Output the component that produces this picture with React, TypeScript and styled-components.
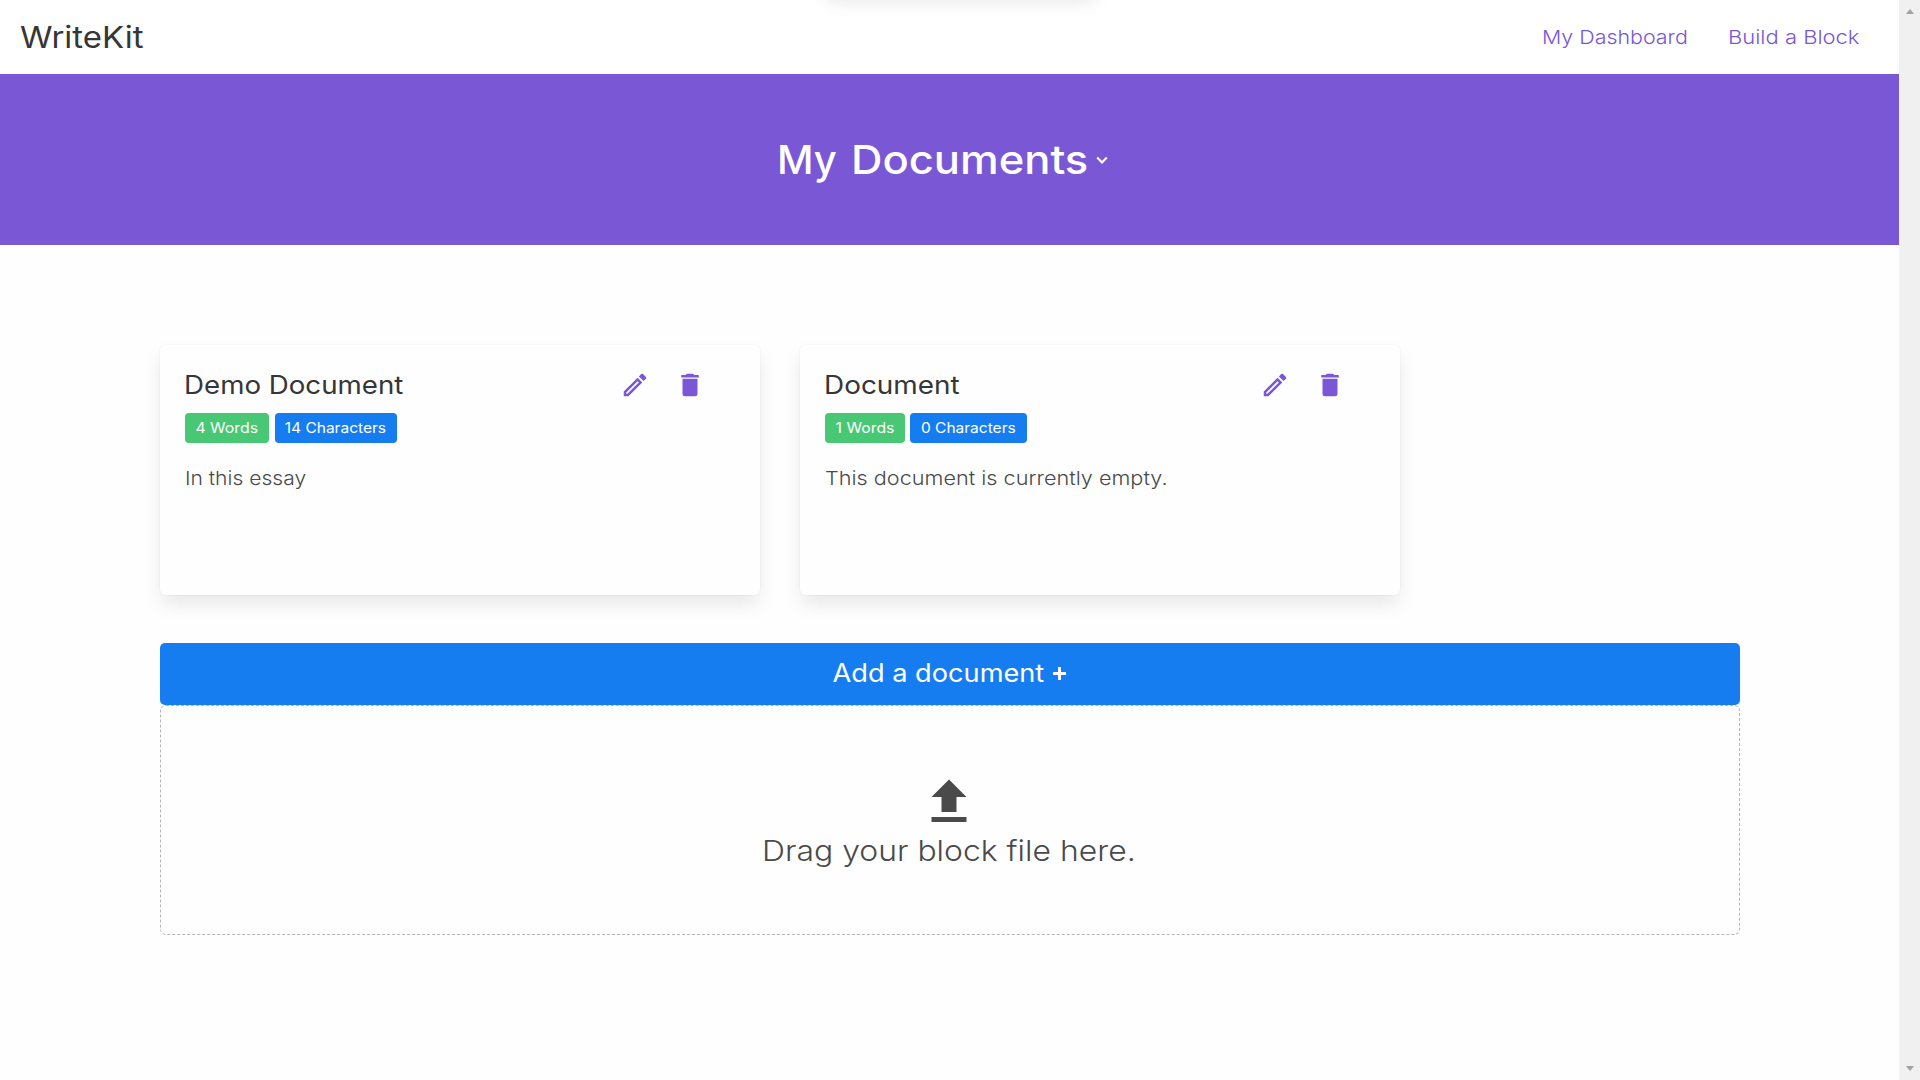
import React from "react";
import styled, { createGlobalStyle } from "styled-components";

const GlobalStyle = createGlobalStyle`
  *, *::before, *::after { box-sizing: border-box; }
  html, body { margin: 0; padding: 0; overflow: hidden; }
  body {
    background: #fefefe;
    color: #4a4a4a;
    font-family: Inter, "Open Sans", sans-serif;
    font-size: 19.3px;
    font-weight: 300;
  }
`;

const Stretch = styled.span<{ $by: number; $from?: string }>`
  display: inline-block;
  white-space: nowrap;
  transform: scaleX(${(p) => p.$by});
  transform-origin: ${(p) => p.$from ?? "left"} center;
`;

const Window = styled.div`
  display: flex;
  height: 1080px;
  position: relative;
  overflow: hidden;
`;

const Page = styled.div`
  flex: 1;
  display: flex;
  flex-direction: column;
`;

const TopNotice = styled.div`
  position: absolute;
  top: -40px;
  left: 826px;
  width: 270px;
  height: 40px;
  border-radius: 6px;
  box-shadow: 0 1px 18px rgba(0, 0, 0, 0.1);
`;

const Navbar = styled.header`
  height: 74px;
  background: #fff;
  display: flex;
  align-items: center;
  justify-content: space-between;
  padding: 0 38px 0 20px;
`;

const Brand = styled.span`
  font-size: 30px;
  font-weight: 400;
  line-height: 74px;
  color: #363636;
`;

const Nav = styled.nav`
  display: flex;
  gap: 40px;
`;

const NavLink = styled.a<{ $width: number }>`
  width: ${(p) => p.$width}px;
  color: #7957d5;
  line-height: 74px;
`;

const Hero = styled.section`
  height: 171px;
  background: #7957d5;
  color: #fff;
  display: flex;
  align-items: center;
  padding-left: 777px;
`;

const HeroTitle = styled.h1`
  margin: 0;
  padding-top: 1px;
  font-size: 40px;
  font-weight: 500;
  line-height: 62px;
  display: flex;
  gap: 14px;
`;

const Word = styled.span<{ $width: number }>`
  width: ${(p) => p.$width}px;
`;

const Chevron = styled.svg`
  margin-left: 6px;
`;

const Content = styled.main`
  padding: 100px 159px 0 160px;
  display: flex;
  flex-direction: column;
`;

const Cards = styled.div`
  display: flex;
  gap: 40px;
  margin-bottom: 48px;
`;

const Card = styled.article`
  width: 600px;
  height: 250px;
  padding: 21px 25px 0;
  border-radius: 6px;
  background: #fefefe;
  box-shadow: 0 10px 20px -2.5px rgba(10, 10, 10, 0.1), 0 0 0 1px rgba(10, 10, 10, 0.02);
`;

const CardHead = styled.div`
  display: flex;
  align-items: center;
  height: 36px;
`;

const CardTitle = styled.h2`
  margin: 0 0 0 -0.6px;
  width: 435.3px;
  font-size: 25.5px;
  font-weight: 400;
  line-height: 37px;
  color: #363636;
`;

const Actions = styled.div`
  display: flex;
  gap: 25px;
  color: #7957d5;
  padding-top: 2px;
`;

const Tags = styled.div`
  display: flex;
  margin-top: 11px;
  gap: 5.5px;
`;

const Tag = styled.span<{ $color: string; $width: number }>`
  width: ${(p) => p.$width}px;
  height: 30px;
  border-radius: 4px;
  background: ${(p) => p.$color};
  color: #fff;
  font-size: 14.5px;
  font-weight: 400;
  line-height: 30px;
  text-align: center;
`;

const Excerpt = styled.p`
  margin: 20px 0 0 -0.4px;
  line-height: 30px;
`;

const AddButton = styled.button`
  height: 62px;
  padding: 0 0 2px;
  border: 0;
  border-radius: 5px;
  background: #167df0;
  color: #fff;
  font: 400 25px Inter, "Open Sans", sans-serif;
  display: flex;
  align-items: center;
  justify-content: center;
  gap: 16.5px;
`;

const Plus = styled.svg`
  margin-right: -7px;
`;

const DropZone = styled.div`
  height: 230px;
  border: 1px dashed #b5b5b5;
  border-radius: 6px;
  display: flex;
  flex-direction: column;
  align-items: center;
  padding: 66px 2px 0 0;
`;

const DropText = styled.span`
  font-size: 29px;
  line-height: 38px;
`;

const Scrollbar = styled.div`
  width: 21px;
  background: #f0f0f0;
  display: flex;
  flex-direction: column;
  justify-content: space-between;
  align-items: center;
  padding: 9px 0;
`;

const Arrow = styled.i<{ $down?: boolean }>`
  border: 4.5px solid transparent;
  border-top: ${(p) => (p.$down ? "5px solid #a3a3a3" : "0")};
  border-bottom: ${(p) => (p.$down ? "0" : "5px solid #a3a3a3")};
`;

const IconSvg = styled.svg`
  display: block;
  flex: none;
`;

const Icon = ({ d, size = 30 }: { d: string; size?: number }) => (
  <IconSvg width={size} height={size} viewBox="0 0 24 24" fill="currentColor">
    <path d={d} />
  </IconSvg>
);

const PENCIL =
  "M14.06,9L15,9.94L5.92,19H5V18.08L14.06,9M17.66,3C17.41,3 17.15,3.1 16.96,3.29L15.13,5.12L18.88,8.87L20.71,7.04C21.1,6.65 21.1,6 20.71,5.63L18.37,3.29C18.17,3.09 17.92,3 17.66,3M14.06,6.19L3,17.25V21H6.75L17.81,9.94L14.06,6.19Z";
const TRASH = "M19,4H15.5L14.5,3H9.5L8.5,4H5V6H19M6,19A2,2 0 0,0 8,21H16A2,2 0 0,0 18,19V7H6V19Z";
const UPLOAD = "M9,16V10H5L12,3L19,10H15V16H9M5,20V18H19V20H5Z";

interface Doc {
  title: string;
  titleStretch: number;
  words: string;
  wordsWidth: number;
  chars: string;
  charsWidth: number;
  text: string;
  textStretch: number;
}

const DOCS: Doc[] = [
  {
    title: "Demo Document", titleStretch: 1.086,
    words: "4 Words", wordsWidth: 84,
    chars: "14 Characters", charsWidth: 122,
    text: "In this essay", textStretch: 1.092,
  },
  {
    title: "Document", titleStretch: 1.095,
    words: "1 Words", wordsWidth: 79.5,
    chars: "0 Characters", charsWidth: 117,
    text: "This document is currently empty.", textStretch: 1.123,
  },
];

export default function App() {
  return (
    <Window>
      <GlobalStyle />
      <Page>
        <Navbar>
          <Brand><Stretch $by={1.1}>WriteKit</Stretch></Brand>
          <Nav>
            <NavLink $width={145.2}><Stretch $by={1.11}>My Dashboard</Stretch></NavLink>
            <NavLink $width={133.4}><Stretch $by={1.14}>Build a Block</Stretch></NavLink>
          </Nav>
        </Navbar>
        <Hero>
          <HeroTitle>
            <Word $width={60}>My</Word>
            <Word $width={238}><Stretch $by={1.088}>Documents</Stretch></Word>
          </HeroTitle>
          <Chevron width="14" height="10" viewBox="0 0 14 10" fill="none" stroke="#fff" strokeWidth="2.1">
            <path d="M2.2 2.6L7 7.4L11.8 2.6" />
          </Chevron>
        </Hero>
        <Content>
          <Cards>
            {DOCS.map((doc) => (
              <Card key={doc.title}>
                <CardHead>
                  <CardTitle><Stretch $by={doc.titleStretch}>{doc.title}</Stretch></CardTitle>
                  <Actions>
                    <Icon d={PENCIL} />
                    <Icon d={TRASH} />
                  </Actions>
                </CardHead>
                <Tags>
                  <Tag $color="#48c774" $width={doc.wordsWidth}>
                    <Stretch $by={1.09} $from="center">{doc.words}</Stretch>
                  </Tag>
                  <Tag $color="#167df0" $width={doc.charsWidth}>
                    <Stretch $by={1.07} $from="center">{doc.chars}</Stretch>
                  </Tag>
                </Tags>
                <Excerpt><Stretch $by={doc.textStretch}>{doc.text}</Stretch></Excerpt>
              </Card>
            ))}
          </Cards>
          <AddButton>
            <Stretch $by={1.087} $from="center">Add a document</Stretch>
            <Plus width="13" height="13" viewBox="0 0 13 13" stroke="#fff" strokeWidth="3">
              <path d="M6.5 0V13M0 6.5H13" />
            </Plus>
          </AddButton>
          <DropZone>
            <Icon d={UPLOAD} size={60} />
            <DropText>
              <Stretch $by={1.1} $from="center">Drag your block file here.</Stretch>
            </DropText>
          </DropZone>
        </Content>
      </Page>
      <Scrollbar>
        <Arrow />
        <Arrow $down />
      </Scrollbar>
      <TopNotice />
    </Window>
  );
}
